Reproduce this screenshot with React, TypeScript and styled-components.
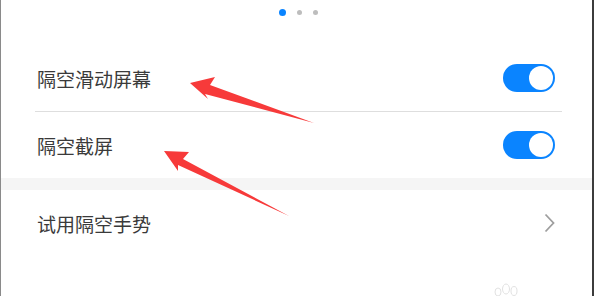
import React from "react";
import styled, { createGlobalStyle } from "styled-components";

const Global = createGlobalStyle`
  html, body { margin: 0; padding: 0; background: #fff; }
  body { font-family: "Noto Sans CJK SC", "Noto Sans", sans-serif; }
`;

const Frame = styled.div`
  position: relative;
  width: 594px;
  height: 296px;
  box-sizing: border-box;
  border-left: 1px solid #8a8a8a;
  border-right: 2px solid #3c3c3c;
  background: #fff;
  overflow: hidden;
  display: flex;
  flex-direction: column;
`;

const DotsBar = styled.div`
  height: 45px;
  display: flex;
  justify-content: center;
  align-items: flex-start;
  padding-top: 9px;
  padding-left: 3px;
  box-sizing: border-box;
  gap: 11px;
`;

const Dot = styled.span<{ $active?: boolean }>`
  width: ${(p) => (p.$active ? 7 : 5)}px;
  height: ${(p) => (p.$active ? 7 : 5)}px;
  margin-top: ${(p) => (p.$active ? 0 : 1)}px;
  border-radius: 50%;
  background: ${(p) => (p.$active ? "#0a84ff" : "#bdbdbd")};
`;

const Row = styled.div`
  height: 66px;
  display: flex;
  align-items: center;
  justify-content: space-between;
  padding: 0 37px 0 36px;
  box-sizing: border-box;
`;

const Label = styled.span`
  font-size: 19px;
  color: #3a3a3a;
  line-height: 1;
`;

const Divider = styled.div`
  height: 1px;
  background: #dedede;
  margin: 0 30px 0 34px;
`;

const Gap = styled.div`
  height: 12px;
  background: #f5f5f5;
`;

const Toggle = styled.div`
  width: 52px;
  height: 28px;
  border-radius: 14px;
  background: #0a84ff;
  display: flex;
  align-items: center;
  justify-content: flex-end;
  padding: 2px;
  box-sizing: border-box;
`;

const Knob = styled.div`
  width: 24px;
  height: 24px;
  border-radius: 50%;
  background: #fff;
`;

const Chevron = styled.svg`
  width: 11px;
  height: 20px;
`;

const Overlay = styled.svg`
  position: absolute;
  left: 0;
  top: 0;
  pointer-events: none;
`;

export default function App() {
  return (
    <>
      <Global />
      <Frame>
        <DotsBar>
          <Dot $active />
          <Dot />
          <Dot />
        </DotsBar>
        <Row>
          <Label>隔空滑动屏幕</Label>
          <Toggle>
            <Knob />
          </Toggle>
        </Row>
        <Divider />
        <Row>
          <Label>隔空截屏</Label>
          <Toggle>
            <Knob />
          </Toggle>
        </Row>
        <Gap />
        <Row>
          <Label>试用隔空手势</Label>
          <Chevron viewBox="0 0 11 20">
            <path d="M1.5 1.5 L9.5 10 L1.5 18.5" fill="none" stroke="#9e9e9e" strokeWidth="1.8" />
          </Chevron>
        </Row>
        <Overlay width="594" height="296" viewBox="0 0 594 296">
          <polygon
            points="189,83 214,77 209,85 313,123 204,94 207,99"
            fill="#f73a3a"
          />
          <polygon
            points="163,151 188,152 182,159 288,216 177,165 177,171"
            fill="#f73a3a"
          />
          <g fill="none" stroke="#e2e2e2" strokeWidth="1">
            <ellipse cx="497" cy="292" rx="3" ry="4" />
            <ellipse cx="505" cy="289" rx="3.5" ry="5" />
            <ellipse cx="513" cy="291" rx="3" ry="4.5" />
          </g>
        </Overlay>
      </Frame>
    </>
  );
}
